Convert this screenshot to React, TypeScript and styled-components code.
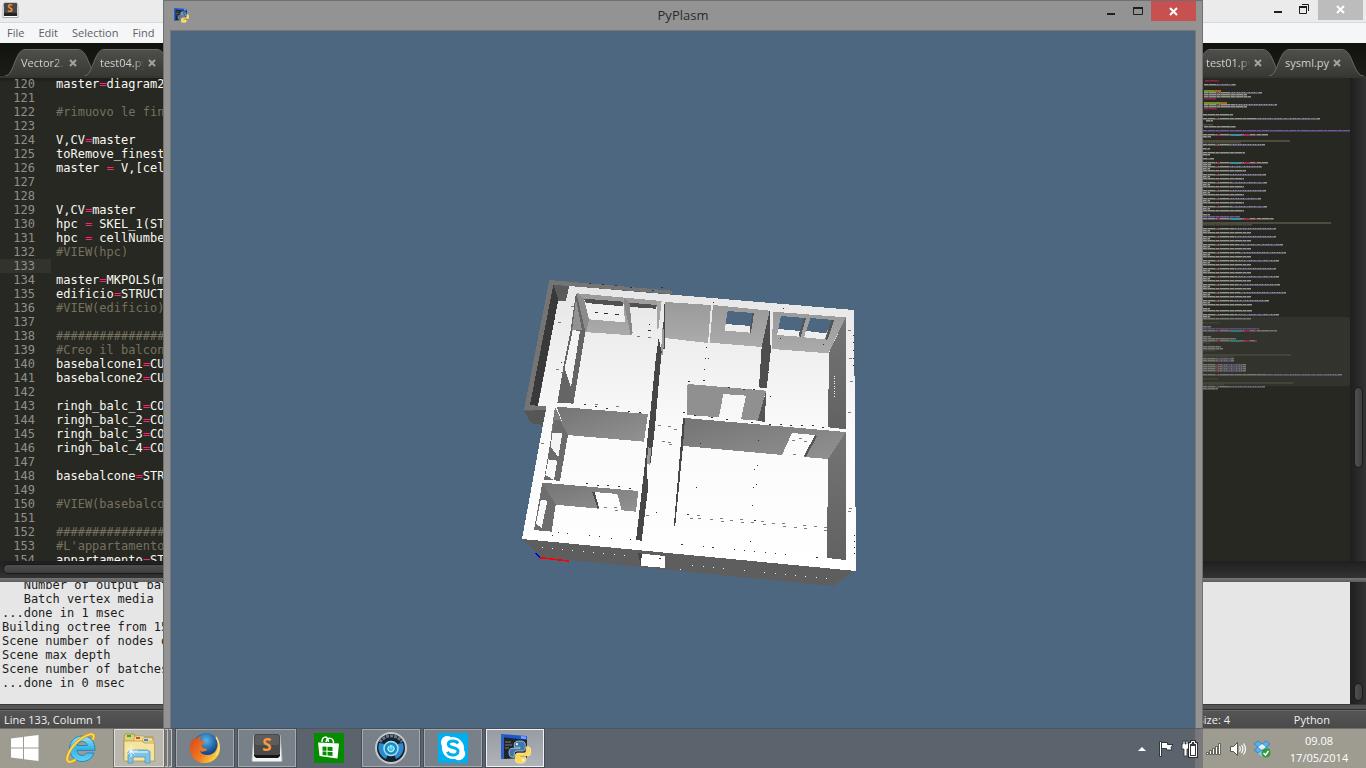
import React from 'react';
import styled, { createGlobalStyle, css } from 'styled-components';

const UI_FONT = '"Open Sans", "Noto Sans", sans-serif';
const MONO_FONT = '"DejaVu Sans Mono", "Liberation Mono", monospace';

const GlobalStyle = createGlobalStyle`
  * { box-sizing: border-box; }
  html, body, #root { height: 100%; margin: 0; }
  body { font-family: ${UI_FONT}; font-size: 11px; overflow: hidden; background: #272822; }
  button { font: inherit; border: 0; padding: 0; background: none; color: inherit; cursor: default; }
`;

const Desktop = styled.div`
  position: relative;
  display: flex;
  flex-direction: column;
  height: 100vh;
  overflow: hidden;
`;

/* ---------- Sublime Text ---------- */

const EditorWindow = styled.section`
  flex: 1;
  min-height: 0;
  display: flex;
  flex-direction: column;
  background: #272822;
`;

const EditorTitle = styled.header`
  flex: none;
  height: 23px;
  display: flex;
  justify-content: space-between;
  align-items: flex-start;
  padding: 2px 3px 0 2px;
  background: #ebebeb;
  border-bottom: 1px solid #d6d9dc;
`;

const WindowButtons = styled.div`
  display: flex;
  align-items: flex-start;
`;

const EditorButtons = styled(WindowButtons)`
  margin-top: -2px;
`;

const WindowButton = styled.button<{ $close?: string }>`
  display: block;
  width: ${p => (p.$close ? 45 : 26)}px;
  height: 20px;
  background: ${p => p.$close || 'transparent'};
  svg { display: block; margin: 0 auto; }
`;

const MenuBar = styled.nav`
  flex: none;
  height: 20px;
  display: flex;
  gap: 14px;
  padding: 0 7px;
  background: #f5f6f8;
  color: #606060;
  button { line-height: 20px; }
`;

const TabStrip = styled.div`
  flex: none;
  height: 35px;
  display: flex;
  justify-content: space-between;
  padding: 6px 1px 0 5px;
  background: linear-gradient(#12130f, #1b1c17);
  border-bottom: 2px solid #353632;
`;

const TabGroup = styled.div`
  display: flex;
`;

const TabShell = styled.div`
  position: relative;
  display: flex;
  align-items: center;
  width: 96px;
  height: 27px;
  margin-right: -17px;
  padding-left: 16px;
  color: #d0d0cc;
  &:last-child { margin-right: 0; }
`;

const TabShape = styled.svg`
  position: absolute;
  inset: 0;
  z-index: 0;
`;

const TabLabel = styled.button<{ $fade: boolean }>`
  position: relative;
  width: 48px;
  white-space: nowrap;
  text-align: left;
  ${p => p.$fade && css`
    mask-image: linear-gradient(to right, #000 34px, transparent 44px);
  `}
`;

const TabClose = styled.button`
  position: relative;
  display: flex;
`;

const EditorBody = styled.div`
  flex: 1;
  min-height: 0;
  display: flex;
  justify-content: space-between;
`;

const CodePane = styled.div`
  width: 240px;
  overflow: hidden;
  box-shadow: inset 0 4px 3px -2px #1c1d18;
`;

const CodeLines = styled.div`
  margin-top: -1px;
  font-family: ${MONO_FONT};
  font-size: 12px;
  line-height: 14px;
  color: #f8f8f2;
`;

const CodeLine = styled.div`
  display: flex;
  height: 14px;
  white-space: pre;
`;

const LineNumber = styled.span<{ $current: boolean }>`
  width: 51px;
  margin-right: 5px;
  padding-right: 16px;
  text-align: right;
  color: #8f908a;
  background: ${p => (p.$current ? '#32332c' : 'transparent')};
`;

const Comment = styled.span`color: #75715e;`;
const Operator = styled.span`color: #f92672;`;

const MapPane = styled.div`
  display: flex;
  width: 163px;
`;

const MapSvg = styled.svg`
  flex: 1;
  height: 100%;
`;

const ScrollTrack = styled.div<{ $top?: string }>`
  width: 16px;
  display: flex;
  flex-direction: column;
  align-items: center;
  padding-top: ${p => p.$top || 0};
  background: linear-gradient(to right, #1f1f1f, #333);
`;

const ScrollThumb = styled.div<{ $size: number }>`
  width: 9px;
  height: ${p => p.$size}px;
  border: 1px solid #1a1a1a;
  border-radius: 5px;
  background: linear-gradient(to right, #505050, #3f3f3f);
`;

const BottomScroll = styled.div`
  flex: none;
  height: 17px;
  padding: 3px 200px 0 3px;
  background: linear-gradient(#1f1f1f, #333);
`;

const BottomThumb = styled.div`
  height: 10px;
  border: 1px solid #191919;
  border-radius: 5px;
  background: linear-gradient(#4e4e4e, #3f3f3f);
`;

const Divider = styled.div`
  flex: none;
  height: 4px;
  background: linear-gradient(#777, #5c5c5c);
`;

const ConsolePanel = styled.div`
  flex: none;
  height: 122px;
  display: flex;
  background: #e6e6e6;
`;

const ConsoleText = styled.pre`
  flex: 1;
  margin: 0;
  padding-left: 2px;
  overflow: hidden;
  font-family: ${MONO_FONT};
  font-size: 12px;
  line-height: 14px;
  color: #1c1c1c;
  code { display: block; margin-top: -4px; font: inherit; }
`;

const StatusBar = styled.footer`
  flex: none;
  height: 24px;
  display: flex;
  padding: 6px 36px 0 4px;
  border-top: 1px solid #3a3a3a;
  background: linear-gradient(#555 4px, #2f2f2f 4px, #2f2f2f 5px, #6a6a6a 5px, #6a6a6a 6px, #555 6px, #4a4a4a);
  color: #f0f0f0;
  line-height: 17px;
  span:first-child { flex: 1; }
  span:last-child { width: 100px; text-align: right; }
`;

/* ---------- PyPlasm window ---------- */

const PlasmWindow = styled.section`
  position: absolute;
  top: 0;
  bottom: 40px;
  left: 163px;
  right: 163px;
  display: flex;
  flex-direction: column;
  padding: 0 6px;
  background: #939393;
  border: solid #707070;
  border-width: 1px 1px 0;
`;

const PlasmTitle = styled.header`
  flex: none;
  height: 29px;
  display: grid;
  grid-template-columns: 1fr auto 1fr;
  color: #2b2b2b;
  svg.app { margin: 6px 0 0 3px; }
  h1 { margin: 0; font-size: 13px; font-weight: 400; line-height: 29px; }
  ${WindowButtons} { justify-self: end; }
`;

const Viewport = styled.div`
  flex: 1;
  min-height: 0;
  border: solid #777;
  border-width: 1px 1px 0;
  background: #4d6780;
  svg { display: block; width: 100%; height: 100%; }
`;

/* ---------- Taskbar ---------- */

const Taskbar = styled.footer`
  position: relative;
  flex: none;
  height: 40px;
  display: flex;
  padding-right: 9px;
  background: linear-gradient(to right, #9e9b91 163px, #75756f 163px, #7b7b7c 171px, #5b636d 171px,
    #5b636d calc(100% - 171px), #75757a calc(100% - 171px), #7b7b7c calc(100% - 163px), #9e9b91 calc(100% - 163px));
  border-top: 1px solid rgba(70, 72, 76, 0.5);
`;

const TaskItems = styled.div`
  flex: 1;
  display: flex;
  gap: 4px;
`;

type TaskState = 'plain' | 'open' | 'light' | 'active';

const taskLook = {
  plain: css`border-color: transparent;`,
  open: css`background: #78818a; border-color: #a3a9af; outline: 1px solid #474e57;`,
  light: css`background: #b9b7ae; border-color: #deddd6; outline: 1px solid #6e6c66;`,
  active: css`background: linear-gradient(#989da4, #b0b3b8); border-color: #f1f2f3; outline: 1px solid #474e57;`,
};

const TaskButton = styled.button<{ $state: TaskState; $width?: number }>`
  width: ${p => p.$width || 58}px;
  height: 38px;
  display: flex;
  align-items: center;
  justify-content: center;
  border: 1px solid transparent;
  outline-offset: 0;
  ${p => taskLook[p.$state]}
`;

const StartButton = styled(TaskButton)`
  padding-left: 2px;
`;

const StackedButton = styled.div`
  display: flex;
  gap: 1px;
  width: 58px;
  height: 38px;
  span {
    width: 3px;
    border: 1px solid #c0c0bd;
    border-left-width: 0;
    background: #77777a;
  }
`;

const Tray = styled.div`
  display: flex;
  align-items: center;
  gap: 2px;
`;

const TrayButton = styled.button`
  width: 22px;
  height: 38px;
  display: flex;
  align-items: center;
  justify-content: center;
`;

const Clock = styled.time`
  width: 76px;
  margin-left: 6px;
  text-align: center;
  line-height: 17px;
  color: #fff;
`;

/* ---------- Data ---------- */

const FIRST_LINE = 120;
const CURRENT_LINE = 133;
const codeLines = [
  'master=diagram2c', '', '#rimuovo le fine', '', 'V,CV=master', 'toRemove_finestr', 'master = V,[cell',
  '', '', 'V,CV=master', 'hpc = SKEL_1(STR', 'hpc = cellNumber', '#VIEW(hpc)', '', 'master=MKPOLS(ma',
  'edificio=STRUCT(', '#VIEW(edificio)', '', '################', '#Creo il balcone', 'basebalcone1=CUB',
  'basebalcone2=CUB', '', 'ringh_balc_1=COL', 'ringh_balc_2=COL', 'ringh_balc_3=COL', 'ringh_balc_4=COL',
  '', 'basebalcone=STRU', '', '#VIEW(basebalcon', '', '################', "#L'appartamento ", 'appartamento=STR',
];

const consoleLines = [
  '   Number of output batc', '   Batch vertex media', '...done in 1 msec', 'Building octree from 15',
  'Scene number of nodes o', 'Scene max depth', 'Scene number of batches', '...done in 0 msec',
];

type MapKind = 'g' | 'p' | 'c' | 'r' | 'b' | 'd' | 'f' | 'v';
/* [top, left, right, kind] of every row in the overview */
const mapRows: [number, number, number, MapKind][] = [
  [2, 2, 16, 'r'], [6, 1, 33, 'p'], [12, 1, 18, 'f'], [14, 1, 59, 'p'], [16, 1, 44, 'g'], [18, 1, 48, 'g'],
  [20, 1, 13, 'r'], [24, 1, 24, 'f'], [26, 1, 74, 'p'], [28, 1, 44, 'g'], [30, 1, 14, 'r'], [36, 0, 30, 'g'],
  [40, 0, 117, 'p'], [42, 3, 10, 'g'], [46, 0, 10, 'd'], [48, 1, 33, 'g'], [52, 0, 147, 'v'], [56, 0, 65, 'c'],
  [58, 0, 8, 'g'], [62, 0, 87, 'b'], [64, 0, 38, 'd'], [66, 0, 62, 'p'], [70, 0, 7, 'p'], [74, 0, 42, 'g'],
  [76, 0, 7, 'g'], [80, 0, 11, 'p'], [84, 0, 65, 'c'], [86, 0, 8, 'g'], [88, 0, 59, 'p'], [90, 0, 7, 'p'],
  [92, 0, 43, 'g'], [96, 0, 63, 'p'], [98, 0, 7, 'p'], [100, 0, 41, 'g'], [104, 0, 64, 'p'], [106, 0, 7, 'p'],
  [108, 0, 41, 'g'], [112, 0, 63, 'p'], [114, 0, 7, 'p'], [116, 0, 41, 'g'], [120, 0, 58, 'p'], [122, 0, 7, 'p'],
  [124, 0, 41, 'g'], [128, 0, 64, 'p'], [130, 0, 7, 'p'], [132, 0, 41, 'g'], [136, 0, 7, 'g'], [138, 0, 37, 'v'],
  [140, 0, 71, 'c'], [144, 0, 128, 'b'], [146, 0, 49, 'd'],
  ...[73, 73, 80, 83, 76, 73, 76, 77, 83].flatMap((w, i): [number, number, number, MapKind][] => [
    [150 + i * 8, 0, w, 'p'], [152 + i * 8, 0, 7, 'p'], [154 + i * 8, 0, 48, 'g'],
  ]),
  [222, 0, 66, 'p'], [224, 0, 7, 'p'], [226, 0, 49, 'g'], [230, 0, 7, 'g'], [232, 0, 49, 'g'],
  [236, 0, 76, 'p'], [238, 0, 7, 'g'], [240, 0, 48, 'g'], [244, 0, 17, 'd'], [248, 0, 8, 'g'], [250, 0, 56, 'v'],
  [252, 0, 74, 'c'], [258, 0, 8, 'g'], [260, 0, 33, 'g'], [262, 0, 54, 'c'], [264, 0, 7, 'd'], [268, 0, 18, 'g'],
  [270, 0, 20, 'g'], [272, 0, 12, 'd'], [276, 0, 88, 'b'], [278, 0, 31, 'd'], [280, 0, 31, 'p'], [282, 0, 31, 'p'],
  [286, 0, 43, 'p'], [288, 0, 43, 'p'], [290, 0, 43, 'p'], [292, 0, 43, 'p'], [296, 0, 139, 'p'], [300, 0, 15, 'd'],
  [304, 0, 90, 'b'], [306, 0, 21, 'd'], [308, 0, 62, 'p'], [310, 0, 15, 'g'],
];

/* stray vertices visible on the rendered model */
const darkSpecks = [
  [596, 312], [606, 313], [616, 314], [649, 330], [584, 404], [595, 406], [606, 408], [628, 411], [639, 412],
  [661, 287], [652, 290], [589, 283], [602, 284], [615, 285], [630, 287],
  [688, 381], [703, 380], [728, 387], [743, 389], [753, 389], [683, 412], [694, 415], [711, 417], [726, 419],
  [751, 422], [769, 424], [780, 424], [790, 425], [801, 425], [812, 425], [822, 427],
  [754, 520], [687, 514], [712, 547], [816, 557], [681, 544],
  [586, 483], [597, 485], [607, 485], [618, 486], [629, 488], [659, 558],
];
const dotSpecks = [
  [706, 347], [705, 358], [708, 358], [704, 369], [768, 372], [770, 396], [700, 443], [758, 440], [757, 465],
  [754, 469], [756, 484], [753, 487], [752, 505], [696, 487], [750, 541], [703, 546], [734, 549], [744, 550],
  [754, 551], [765, 552], [775, 553], [785, 554], [552, 535], [558, 532], [567, 533], [589, 535], [599, 536],
  [611, 538], [630, 539], [656, 512], [783, 308], [713, 302], [780, 338], [823, 344], [853, 335], [853, 342],
  [853, 350], [853, 358], [853, 365], [854, 535], [854, 541], [854, 547], [854, 553], [649, 324], [561, 362],
];
const midSpecks = [
  [558, 322], [571, 306], [556, 369], [561, 372], [637, 336], [648, 337], [595, 404], [616, 406], [658, 425],
  [668, 426], [674, 429], [662, 441], [669, 444], [668, 442], [690, 518], [697, 515], [698, 518], [710, 519],
  [720, 518], [721, 521], [730, 520], [740, 519], [741, 522], [751, 522], [761, 521], [763, 524], [772, 523],
  [782, 523], [783, 526], [794, 527], [803, 525], [804, 528], [814, 526], [824, 527], [824, 530], [848, 330],
  [849, 358], [850, 381], [848, 412], [849, 508], [848, 511], [792, 440], [799, 438], [804, 441], [793, 454],
  [604, 507], [614, 507], [615, 510], [646, 515], [541, 443],
];
const lightSpecks = [
  [542, 547], [552, 548], [562, 549], [572, 550], [583, 551], [593, 552], [603, 553], [614, 554], [624, 555],
  [680, 569], [692, 565], [703, 566], [713, 567], [723, 568], [744, 570], [764, 572], [775, 573], [785, 574],
  [795, 575], [805, 576], [816, 577], [826, 578], [834, 376], [834, 381], [834, 386], [834, 391], [834, 396],
  [834, 378], [834, 383], [834, 388], [834, 393],
];

/* ---------- Small pictures ---------- */

const PythonMark = ({ x = 0, y = 0, s = 1 }: { x?: number; y?: number; s?: number }) => (
  <g transform={`translate(${x} ${y}) scale(${s})`}>
    <path d="M10 0c-4 0-5 1.500-5 3.500V6h5.500v1H3C1 7 0 8.500 0 11s1 4.500 3 4.500h2V12.500C5 10.500 6 9.500 8 9.500h5c1.500 0 2.500-1 2.500-2.500V3.500C15.500 1 14 0 10 0z" fill="#3a78ae" stroke="#e6edf3" strokeWidth=".6" />
    <path d="M11 21c4 0 5-1.500 5-3.500V15h-5.500v-1H18c2 0 3-1.500 3-4s-1-4.500-3-4.500h-1.500V8.500c0 2-1 3-3 3h-5C7 11.500 6 12.500 6 14v3.500C6 20 7 21 11 21z" fill="#ffd84d" stroke="#fff7d5" strokeWidth=".6" />
    <circle cx="7.500" cy="3" r="1" fill="#fff" />
    <circle cx="13.500" cy="18" r="1" fill="#fff" />
  </g>
);

const PythonIcon = ({ size }: { size: number }) => (
  <svg className="app" width={size} height={size} viewBox="0 0 32 32" aria-hidden="true">
    <path d="M2 2l26 2v5L2 6z" fill="#1b57cf" />
    <path d="M2 5l26 3v18L2 27z" fill="#20242a" />
    <path d="M2 2h3v25H2z" fill="#2b62c8" />
    <path d="M22 4l5 .5v2.500l-5-.5z" fill="#7ba4f2" />
    <path d="M6 10h6M6 13h7M6 16h4" stroke="#777d84" />
    <PythonMark x={10} y={9} s={1.050} />
  </svg>
);

const SublimeSmall = () => (
  <svg width="17" height="17" viewBox="0 0 17 17" aria-hidden="true">
    <path d="M1 5l1-4h13l1 4v10.500H1z" fill="#fff" stroke="#a8a8a8" />
    <rect x="2" y="1" width="13" height="12" rx="1" fill="#484848" />
    <path d="M2 11h13v3H2z" fill="#222" />
    <text x="8" y="10" textAnchor="middle" fontSize="10" fontWeight="700" fill="#f0913a" fontFamily="Open Sans, sans-serif">S</text>
  </svg>
);

const MinimizeGlyph = ({ y }: { y: number }) => (
  <svg width="26" height="20" aria-hidden="true"><path d={`M8 ${y}h8v2H8z`} fill="#1e1e1e" /></svg>
);
const CloseGlyph = ({ y }: { y: number }) => (
  <svg width="45" height="20" aria-hidden="true">
    <path d={`M19 ${y}l7 7M26 ${y}l-7 7`} stroke="#fff" strokeWidth="2" />
  </svg>
);

const WindowsLogo = () => (
  <svg width="28" height="26" viewBox="0 0 28 26" aria-hidden="true">
    <path d="M0 3.500L12 2v10.500H0zM13 1.800L27.500 0v12.500H13zM0 13.500h12V24L0 22.500zM13 13.500h14.500V26L13 24.200z" fill="#fff" />
  </svg>
);

const ExplorerBrowser = () => (
  <svg width="32" height="32" viewBox="0 0 32 32" aria-hidden="true">
    <defs>
      <linearGradient id="ie" x1="0" y1="0" x2="0" y2="1"><stop offset="0" stopColor="#9be4fb" /><stop offset=".5" stopColor="#35b3ea" /><stop offset="1" stopColor="#5fd3f8" /></linearGradient>
    </defs>
    <path d="M17.500 4C10 4 4.500 9.500 4.500 16.500S10 29.500 17 29.500c6 0 10.500-3.500 12-8.500h-7.500c-1 1.700-2.500 2.400-4.300 2.400-3 0-5-2-5.200-5H30C30.500 10 25.500 4 17.500 4zm-5.400 9.500c.7-2.500 2.500-4 5.200-4s4.600 1.500 5 4z" fill="url(#ie)" stroke="#2386bd" strokeWidth="1" />
    <path d="M28 7c2-4 0-6-5-4C14 6 5 16 2.500 24.500 1 31 5 31 10 28" fill="none" stroke="#d99a14" strokeWidth="3" strokeLinecap="round" />
    <path d="M28 7c2-4 0-6-5-4C14 6 5 16 2.500 24.500 1 31 5 31 10 28" fill="none" stroke="#fddc52" strokeWidth="1.800" strokeLinecap="round" />
  </svg>
);

const FolderIcon = () => (
  <svg width="34" height="32" viewBox="0 0 34 32" aria-hidden="true">
    <path d="M2 5l1-3h9l1 3h18v23H2z" fill="#e5cd77" stroke="#a98b35" strokeWidth=".8" />
    <path d="M12 7l1-3h9l1 3h9v6H12z" fill="#f1df9c" stroke="#b69a45" strokeWidth=".6" />
    <path d="M20 9l1-3h9l1 3z" fill="#f6e8b2" stroke="#b69a45" strokeWidth=".6" />
    <path d="M5 3h4v2H5z" fill="#23b12d" /><path d="M14 5h4v2h-4z" fill="#d64a2b" /><path d="M22 7h4v2h-4z" fill="#3e8ee0" />
    <path d="M2 9h18l2 2h10.500v18H2z" fill="#f5e49f" stroke="#b0923c" strokeWidth=".7" />
    <path d="M6 31V19.500L9 18h16l3 1.500V31h-5v-6H11v6z" fill="#7fc3e4" stroke="#4b97c2" strokeWidth=".8" />
    <path d="M8 20h18" stroke="#c9ecfa" strokeWidth="1.500" />
    <path d="M9 13v12M3.500 19h12M5.500 15.500l7 7M12.500 15.500l-7 7" stroke="#fff" strokeWidth=".8" />
  </svg>
);

const FirefoxIcon = () => (
  <svg width="32" height="32" viewBox="0 0 32 32" aria-hidden="true">
    <defs>
      <linearGradient id="fox" x1="0" y1="0" x2="1" y2=".6"><stop offset="0" stopColor="#d8441b" /><stop offset=".6" stopColor="#f07b22" /><stop offset="1" stopColor="#fbd543" /></linearGradient>
      <radialGradient id="globe" cx=".5" cy=".3"><stop offset="0" stopColor="#56b6e8" /><stop offset="1" stopColor="#164a91" /></radialGradient>
    </defs>
    <circle cx="17" cy="13.500" r="12.500" fill="url(#globe)" />
    <path d="M4 7c-3 4-4 9-2.500 14C4 28 10 31.500 17 31c8-.6 14-7 14-15 0-4-1-8-4-11 2 5 2 9 .5 12-1.500 4-5 6-9.500 6-3.500 0-6-1.500-7-4 2 1 4 .8 6-.5 1-.7 1.500-1.200.5-1.700-2.500 0-4-1.300-5-2.800.2-1.500 2-2.500 3.500-3.500.5-1-.5-1.500-2.500-1.500-1-.1-2-.2-2.700-.8C11 6 12 4.500 13 4c-3 0-4.800 1.500-5.800 3C6 6.700 5 6.800 4 7z" fill="url(#fox)" />
    <path d="M27 5c4 6 4 13 0 18" fill="none" stroke="#fde36a" strokeWidth="1.500" />
  </svg>
);

const SublimeIcon = () => (
  <svg width="32" height="32" viewBox="0 0 32 32" aria-hidden="true">
    <path d="M3 3h26l2 25c0 1-.5 1.500-1.500 1.500h-27C1.500 29.500 1 29 1 28z" fill="#f4f4f4" stroke="#bdbdbd" />
    <path d="M3 22h26v2l-2 2H5l-2-2z" fill="#161616" />
    <rect x="3" y="2" width="26" height="21" rx="2" fill="#4a4a4a" />
    <rect x="4" y="3" width="24" height="10" rx="2" fill="#5d5d5d" />
    <text x="16" y="18.500" textAnchor="middle" fontSize="17" fontWeight="700" fill="#fa9a3c" fontFamily="Open Sans, sans-serif">S</text>
  </svg>
);

const StoreIcon = () => (
  <svg width="30" height="30" viewBox="0 0 30 30" aria-hidden="true">
    <path d="M0 0h30v30H0z" fill="#058b00" />
    <path d="M4 9.500l21 1-1.500 15L5.500 23z" fill="#fff" />
    <path d="M8 9c0-6 6-7 6.500 0M12 9c1-5 8-5 7.500 1" fill="none" stroke="#fff" strokeWidth="1.500" />
    <path d="M8.500 13.500l4 .2v4h-4zM13.500 13.700l5 .3v4l-5-.2zM8.500 18.500l4 .1v3.900l-4-.5zM13.500 18.700l5 .2V23l-5-.5z" fill="#058b00" />
  </svg>
);

const DiscIcon = () => (
  <svg width="32" height="32" viewBox="0 0 32 32" aria-hidden="true">
    <circle cx="16" cy="16" r="15" fill="#15212d" stroke="#c3c9cd" strokeWidth="2" />
    <path d="M5 10a13 13 0 0 1 22 0" fill="none" stroke="#697681" strokeWidth="3" strokeDasharray="3 1" />
    <path d="M4 11a13 13 0 0 0 7 16l2-5a7.500 7.500 0 0 1-3-10zM28 11a13 13 0 0 1-7 16l-2-5a7.500 7.500 0 0 0 3-10z" fill="#2c8bd0" />
    <circle cx="16" cy="16.500" r="7" fill="#1a8dc3" stroke="#a8dff4" strokeWidth="1.500" />
    <circle cx="16" cy="16.500" r="4.500" fill="#3dc0ea" stroke="#1478ad" />
    <path d="M16 13v3.500M14 14.500a3 3 0 1 0 4 0" fill="none" stroke="#d6f7ff" strokeWidth="1" />
  </svg>
);

const SkypeIcon = () => (
  <svg width="30" height="30" viewBox="0 0 30 30" aria-hidden="true">
    <path d="M0 0h30v30H0z" fill="#00aff0" />
    <path d="M9 3a6.500 6.500 0 0 1 4 1.200A11.500 11.500 0 0 1 26 17a6.500 6.500 0 0 1-9 9A11.500 11.500 0 0 1 4 13 6.500 6.500 0 0 1 9 3z" fill="#fff" />
    <path d="M20 10.500C19 8.500 17 8 15 8c-3 0-4.700 1.200-4.700 3.300 0 4.500 9.700 2.200 9.700 6.900 0 2.500-2.500 3.800-5 3.800-2.700 0-4.700-1-5.500-3.200" fill="none" stroke="#00aff0" strokeWidth="3" />
  </svg>
);

const TabView = ({ name, fade }: { name: string; fade: boolean }) => (
  <TabShell>
    <TabShape width="96" height="27" viewBox="0 0 96 27" aria-hidden="true">
      <defs><linearGradient id="tab" x1="0" y1="0" x2="0" y2="1"><stop offset="0" stopColor="#4e4f4b" /><stop offset="1" stopColor="#383935" /></linearGradient></defs>
      <path d="M0 27C9 27 10 1 20 1H73C84 1 84 27 95 27z" fill="url(#tab)" />
      <path d="M0 27C9 27 10 .5 20 .5H73C84 .5 84 27 95 27" fill="none" stroke="#6c6d69" />
    </TabShape>
    <TabLabel $fade={fade}>{name}</TabLabel>
    <TabClose aria-label={`Close ${name}`}>
      <svg width="8" height="8" aria-hidden="true"><path d="M1 1l6 6M7 1L1 7" stroke="#a2a39f" strokeWidth="2" /></svg>
    </TabClose>
  </TabShell>
);

const Code = ({ text }: { text: string }) =>
  text.startsWith('#')
    ? <Comment>{text}</Comment>
    : <span>{text.split(/(=)/).map((part, i) => (part === '=' ? <Operator key={i}>=</Operator> : part))}</span>;

const mapColor: Record<MapKind, string> = {
  g: '#94958e', p: '#94958e', c: '#94958e', r: '#8d2547', b: '#4d4c3e', d: '#4a493e', f: '#6d9422', v: '#6f5a9c',
};

const Minimap = () => (
  <MapSvg aria-hidden="true">
    <rect width="100%" height="100%" fill="#272822" />
    <path d="M0 239H144a3 3 0 0 1 3 3V305a3 3 0 0 1-3 3H0z" fill="#32332d" />
    {mapRows.map(([y, x0, x1, kind], i) => {
      const solid = kind === 'b' || kind === 'f';
      const w = x1 - x0;
      const line = (a: number, b: number, color: string, key: string) => (
        <path key={key} d={`M${a} ${y}.5H${b}`} stroke={color} strokeDasharray={solid ? undefined : key === 'tail' ? '2 1 1 1' : '4 1 7 1 3 1 9 1'} />
      );
      return (
        <g key={i} opacity={y > 239 ? 0.7 : 1}>
          <path d={`M${x0} ${y + 1}H${x1}`} stroke={mapColor[kind]} strokeWidth="2" opacity={solid ? 1 : 0.5} />
          {line(x0, x1, mapColor[kind], 'base')}
          {kind === 'p' && line(x0 + Math.round(w * 0.45), x1 - 3, '#6c55a0', 'tail')}
          {kind === 'p' && w > 40 && <path d={`M${x0 + 13} ${y + 0.5}h2`} stroke="#a52c54" />}
          {kind === 'c' && <path d={`M${x0 + 28} ${y + 1}h10`} stroke="#3b8f96" strokeWidth="2" />}
          {kind === 'c' && <path d={`M14 ${y + 1}h3m24 0h6m5 0h2`} stroke="#a52c54" strokeWidth="2" />}
          {kind === 'f' && <path d={`M${x1 - 7} ${y + 1}H${x1}`} stroke="#a8681c" strokeWidth="2" />}
        </g>
      );
    })}
  </MapSvg>
);

const Specks = ({ points, color, width }: { points: number[][]; color: string; width: number }) => (
  <path d={points.map(([x, y]) => `M${x} ${y}h${width}v1h-${width}z`).join('')} fill={color} />
);

const BuildingModel = () => (
  <svg viewBox="171 31 1024 697" preserveAspectRatio="xMidYMid meet" shapeRendering="crispEdges" role="img" aria-label="Apartment model">
    <defs>
      <linearGradient id="top" x1="0" y1="0" x2="0" y2="1"><stop offset="0" stopColor="#e6e6e6" /><stop offset=".5" stopColor="#fafafa" /><stop offset="1" stopColor="#fff" /></linearGradient>
      <linearGradient id="wall" x1="0" y1="0" x2="0" y2="1"><stop offset="0" stopColor="#9a9a9a" /><stop offset="1" stopColor="#ababab" /></linearGradient>
      <linearGradient id="wall2" x1="0" y1="0" x2="1" y2="1"><stop offset="0" stopColor="#747474" /><stop offset="1" stopColor="#929292" /></linearGradient>
      <linearGradient id="side" x1="0" y1="0" x2="0" y2="1"><stop offset="0" stopColor="#747474" /><stop offset="1" stopColor="#626262" /></linearGradient>
    </defs>

    {/* outer front wall, roofless top face */}
    <path d="M522 539L855 571 833 586 690 572 540 557z" fill="#5e5e5e" />
    <path d="M569 286L854 310 856 571 522 539 546 408 538 406 558 301 566 301z" fill="url(#top)" />

    {/* balcony and the rooms at the upper left */}
    <g transform="translate(510 270) scale(.33333)">
      <path d="M118 30L485 62V72L178 48 130 44 60 405 108 408V422L42 420z" fill="#747474" />
      <path d="M130 44L145 90 83 408 60 404z" fill="#393939" />
      <path d="M130 44L177 50 168 92 145 90z" fill="#5a5a5a" />
      <path d="M42 422L108 421 98 465 66 460 58 452z" fill="#565656" />
      <path d="M200 70L455 93 442 112 358 98 366 196 222 186z" fill="url(#wall)" />
      <path d="M200 70L222 86 237 150 228 185 222 186 200 100z" fill="#8b8b8b" />
      <path d="M222 86L340 95 345 157 237 148z" fill="#f0f0f0" />
      <path d="M222 86L340 95V109L228 99z" fill="#515151" />
      <path d="M358 98L440 105 437 116 360 111z" fill="#515151" />
      <path d="M342 84L358 97 368 190 362 196 344 110z" fill="#898989" />
      <path d="M442 93L455 93 445 180 441 175z" fill="#a7a7a7" />
      <path d="M200 72L226 185 190 401 142 398 160 292 182 180 196 80z" fill="#656565" />
      <path d="M198 88L216 180 186 182z" fill="#929292" />
      <path d="M188 181L210 182 183 352 164 295z" fill="#f4f4f4" />
      <path d="M464 95L465 150 465 236 456 236z" fill="#474747" />
      <path d="M457 175L462 178 460 254 453 254z" fill="#9b9b9b" />
      <path d="M446 205L455 245 431 510H413L438 260z" fill="#464646" />
      <path d="M135 410L172 490 172 510H150L122 500z" fill="#7e7e7e" />
      <path d="M140 410L414 432 402 515 171 495z" fill="url(#wall2)" />
      <path d="M532 345L540 343V432L530 432z" fill="#999" />
      <path d="M254 127h8m20 4h12m20 3h12M415 181h6" stroke="#222" strokeWidth="3" />
    </g>

    {/* rooms at the upper right */}
    <path d="M665 302L711 305 708 343 665 338z" fill="url(#wall)" />
    <g transform="translate(680 280) scale(.33333)">
      <path d="M99 75L270 92 245 201 89 188z" fill="url(#wall)" />
      <path d="M143 93L221 99 213 138 137 132z" fill="#4d6780" />
      <path d="M137 132L213 138 210 158 135 152z" fill="#eee" />
      <path d="M217 99L222 100 213 158 209 157z" fill="#555" />
      <path d="M269 92L272 215 260 325 237 322 245 200z" fill="#4e4e4e" />
      <path d="M279 95L497 112 445 220 276 207z" fill="url(#wall)" />
      <path d="M303 108L375 114 360 153 295 147z" fill="#4d6780" />
      <path d="M295 147L360 153 356 170 291 165z" fill="#eee" />
      <path d="M372 113L378 114 362 170 355 169z" fill="#555" />
      <path d="M392 114L459 120 438 160 378 153z" fill="#4d6780" />
      <path d="M378 153L440 160 435 178 372 172z" fill="#eee" />
      <path d="M455 119L462 121 442 180 435 178z" fill="#555" />
      <path d="M497 112L498 448 444 442 447 218z" fill="url(#side)" />
      <path d="M24 312L258 332 235 422 183 418 198 347 130 342 117 412 21 405z" fill="#909090" />
      <path d="M258 335L255 426 233 422z" fill="#555" />
    </g>

    {/* large living room */}
    <path d="M685 418L846 432 828 459 804 457 815 435 792 433 782 455 683 446z" fill="url(#wall2)" />
    <path d="M815 435L817 436 806 457 804 456z" fill="#555" />
    <path d="M846 432L846 560 827 558 828 459z" fill="url(#side)" />
    <path d="M683 418h2L683 446 675 528 674 524z" fill="#474747" />

    {/* rooms at the lower left and the entrance */}
    <g transform="translate(510 420) scale(.33333)">
      <path d="M132 0H150L174 45 150 182 102 180z" fill="#6b6b6b" />
      <path d="M127 40L157 40 145 112 122 80z" fill="#f4f4f4" />
      <path d="M115 118L142 122 132 180 106 165z" fill="#f8f8f8" />
      <path d="M97 188L385 213 378 275 335 271 322 222 252 216 267 266 135 254z" fill="url(#wall2)" />
      <path d="M247 216L254 217 268 266 262 264z" fill="#4c4c4c" />
      <path d="M97 188L137 254 125 335 72 330z" fill="#6d6d6d" />
      <path d="M92 240L112 242 95 325 78 310z" fill="#f9f9f9" />
      <path d="M418 0H437L422 130 412 132 413 215 395 362 378 360 405 130z" fill="#474747" />
      <path d="M414 80L422 85 421 135 411 130z" fill="#9b9b9b" />
      <path d="M386 400L466 408V444L394 438z" fill="#fff" />
      <path d="M384 398L396 402 392 438z" fill="#444" />
      <path d="M76 400L90 413" stroke="#0000e8" strokeWidth="4" />
      <path d="M90 413L176 423" stroke="#f00" strokeWidth="5" />
    </g>

    <Specks points={darkSpecks} color="#333" width={2} />
    <Specks points={dotSpecks} color="#333" width={1} />
    <Specks points={midSpecks} color="#7c7c7c" width={3} />
    <Specks points={lightSpecks} color="#f4f4f4" width={1} />
  </svg>
);

export default function App() {
  return (
    <Desktop>
      <GlobalStyle />
      <EditorWindow>
        <EditorTitle>
          <SublimeSmall />
          <EditorButtons>
            <WindowButton aria-label="Minimize editor"><MinimizeGlyph y={11} /></WindowButton>
            <WindowButton aria-label="Restore editor">
              <svg width="26" height="20" aria-hidden="true"><path d="M7.500 6.500h7v7h-7zM10 4.500h6.500V11" fill="none" stroke="#1e1e1e" /><path d="M7 6h8v2H7z" fill="#1e1e1e" /></svg>
            </WindowButton>
            <WindowButton $close="#bcbcbc" aria-label="Close editor"><CloseGlyph y={6} /></WindowButton>
          </EditorButtons>
        </EditorTitle>
        <MenuBar>
          {['File', 'Edit', 'Selection', 'Find'].map(m => <button key={m}>{m}</button>)}
        </MenuBar>
        <TabStrip>
          <TabGroup>
            <TabView name="Vector2." fade />
            <TabView name="test04.py" fade />
          </TabGroup>
          <TabGroup>
            <TabView name="test01.py" fade />
            <TabView name="sysml.py" fade={false} />
          </TabGroup>
        </TabStrip>
        <EditorBody>
          <CodePane>
            <CodeLines>
              {codeLines.map((text, i) => (
                <CodeLine key={i}>
                  <LineNumber $current={FIRST_LINE + i === CURRENT_LINE}>{FIRST_LINE + i}</LineNumber>
                  <Code text={text} />
                </CodeLine>
              ))}
            </CodeLines>
          </CodePane>
          <MapPane>
            <Minimap />
            <ScrollTrack $top="309px"><ScrollThumb $size={81} /></ScrollTrack>
          </MapPane>
        </EditorBody>
        <BottomScroll><BottomThumb /></BottomScroll>
        <Divider />
        <ConsolePanel>
          <ConsoleText><code>{consoleLines.join('\n')}</code></ConsoleText>
          <ScrollTrack $top="101px"><ScrollThumb $size={18} /></ScrollTrack>
        </ConsolePanel>
        <StatusBar>
          <span>Line 133, Column 1</span>
          <span>Size: 4</span>
          <span>Python</span>
        </StatusBar>
      </EditorWindow>

      <PlasmWindow>
        <PlasmTitle>
          <PythonIcon size={16} />
          <h1>PyPlasm</h1>
          <WindowButtons>
            <WindowButton aria-label="Minimize"><MinimizeGlyph y={12} /></WindowButton>
            <WindowButton aria-label="Maximize">
              <svg width="26" height="20" aria-hidden="true"><path d="M8.500 6.500h9v7h-9z" fill="none" stroke="#1e1e1e" /><path d="M8 6h10v2H8z" fill="#1e1e1e" /></svg>
            </WindowButton>
            <WindowButton $close="#c75050" aria-label="Close"><CloseGlyph y={7} /></WindowButton>
          </WindowButtons>
        </PlasmTitle>
        <Viewport><BuildingModel /></Viewport>
      </PlasmWindow>

      <Taskbar>
        <TaskItems>
          <StartButton $state="plain" $width={48} aria-label="Start"><WindowsLogo /></StartButton>
          <TaskButton $state="plain" aria-label="Internet Explorer"><ExplorerBrowser /></TaskButton>
          <StackedButton>
            <TaskButton $state="light" $width={50} aria-label="File Explorer"><FolderIcon /></TaskButton>
            <span /><span />
          </StackedButton>
          <TaskButton $state="open" aria-label="Firefox"><FirefoxIcon /></TaskButton>
          <TaskButton $state="open" aria-label="Sublime Text"><SublimeIcon /></TaskButton>
          <TaskButton $state="plain" aria-label="Store"><StoreIcon /></TaskButton>
          <TaskButton $state="open" aria-label="Disc tool"><DiscIcon /></TaskButton>
          <TaskButton $state="open" aria-label="Skype"><SkypeIcon /></TaskButton>
          <TaskButton $state="active" aria-label="PyPlasm"><PythonIcon size={32} /></TaskButton>
        </TaskItems>
        <Tray>
          <TrayButton aria-label="Show hidden icons">
            <svg width="8" height="5" aria-hidden="true"><path d="M0 5l4-4 4 4z" fill="#fff" /></svg>
          </TrayButton>
          <TrayButton aria-label="Action center">
            <svg width="18" height="18" viewBox="0 0 18 18" aria-hidden="true">
              <path d="M2.500 1.500h2v15h-2zM4.500 2.500h6v2h5.500l-2 3 1 2.500H9.500V8.500h-5z" fill="#fff" stroke="#33383e" />
            </svg>
          </TrayButton>
          <TrayButton aria-label="Battery">
            <svg width="18" height="18" viewBox="0 0 18 18" aria-hidden="true">
              <path d="M2 1h2v3h1V1h2v3h1v5H6v7H3V9H1V4h1z" fill="#fff" stroke="#2c3036" strokeWidth=".8" />
              <path d="M8.500 3.500h2v-2h3v2h2v13h-7z" fill="none" stroke="#2c3036" strokeWidth="3" />
              <path d="M8.500 3.500h2v-2h3v2h2v13h-7z" fill="#34383d" stroke="#fff" />
              <path d="M10 6h4v9h-4z" fill="#fff" />
            </svg>
          </TrayButton>
          <TrayButton aria-label="Network">
            <svg width="18" height="16" viewBox="0 0 18 16" aria-hidden="true">
              <path d="M1.500 11.500h2v2h-2zM4.500 9.500h2v4h-2zM7.500 7.500h2v6h-2zM10.500 5.500h2v8h-2zM13.500 2.500h2v11h-2z" fill="#fff" stroke="#4a4a46" strokeWidth=".8" />
            </svg>
          </TrayButton>
          <TrayButton aria-label="Volume">
            <svg width="18" height="18" viewBox="0 0 18 18" aria-hidden="true">
              <path d="M1.500 6.500h3l4-4v13l-4-4h-3z" fill="#fff" stroke="#55544f" />
              <path d="M10.500 6.500q1.500 2.500 0 5M12.500 5q2.800 4 0 8M14.500 3.500q4 5.500 0 11" fill="none" stroke="#fff" strokeWidth="1.200" />
            </svg>
          </TrayButton>
          <TrayButton aria-label="Dropbox">
            <svg width="18" height="18" viewBox="0 0 18 18" aria-hidden="true">
              <path d="M5 1l4 3-4 3-4-3zM13 1l4 3-4 3-4-3zM5 7l4 3-4 3-4-3zM13 7l4 3-4 3-4-3z" fill="#5bb1ee" stroke="#2f7fc4" strokeWidth=".8" />
              <path d="M9 4l4 3-4 3-4-3z" fill="#dff1fd" />
              <path d="M5 13.500l4-3 4 3-4 3z" fill="#86c8f5" />
              <circle cx="13" cy="13" r="4.500" fill="#2e9d37" />
              <path d="M10.500 13l2 2 3-4" fill="none" stroke="#fff" strokeWidth="1.500" />
            </svg>
          </TrayButton>
          <Clock>09.08<br />17/05/2014</Clock>
        </Tray>
      </Taskbar>
    </Desktop>
  );
}
